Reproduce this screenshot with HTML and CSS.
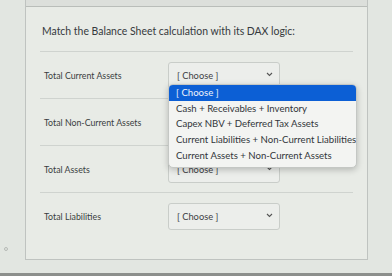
FILE: index.html
```html
<!DOCTYPE html>
<html>
<head>
<meta charset="utf-8">
<link rel="stylesheet" href="styles.css">
</head>
<body>
<div class="screen">
  <div class="card">
    <div class="card-top"></div>
    <div class="card-body">
      <p class="title">Match the Balance Sheet calculation with its DAX logic:</p>
      <div class="row">
        <span class="label">Total Current Assets</span>
        <div class="select-wrap">
          <div class="select"><span>[ Choose ]</span><svg class="chev" viewBox="0 0 8 6" width="7" height="5"><path d="M1 1.2 L4 4.2 L7 1.2" fill="none" stroke="#555" stroke-width="1.3"/></svg></div>
          <ul class="menu">
            <li class="selected">[ Choose ]</li>
            <li>Cash + Receivables + Inventory</li>
            <li>Capex NBV + Deferred Tax Assets</li>
            <li>Current Liabilities + Non-Current Liabilities</li>
            <li>Current Assets + Non-Current Assets</li>
          </ul>
        </div>
      </div>
      <div class="row">
        <span class="label">Total Non-Current Assets</span>
        <div class="select-wrap">
          <div class="select covered"><span>[ Choose ]</span><svg class="chev" viewBox="0 0 8 6" width="7" height="5"><path d="M1 1.2 L4 4.2 L7 1.2" fill="none" stroke="#555" stroke-width="1.3"/></svg></div>
        </div>
      </div>
      <div class="row">
        <span class="label">Total Assets</span>
        <div class="select-wrap">
          <div class="select"><span>[ Choose ]</span><svg class="chev" viewBox="0 0 8 6" width="7" height="5"><path d="M1 1.2 L4 4.2 L7 1.2" fill="none" stroke="#555" stroke-width="1.3"/></svg></div>
        </div>
      </div>
      <div class="row">
        <span class="label">Total Liabilities</span>
        <div class="select-wrap">
          <div class="select"><span>[ Choose ]</span><svg class="chev" viewBox="0 0 8 6" width="7" height="5"><path d="M1 1.2 L4 4.2 L7 1.2" fill="none" stroke="#555" stroke-width="1.3"/></svg></div>
        </div>
      </div>
    </div>
  </div>
  <span class="dot"></span>
  <div class="bottom-strip"></div>
</div>
</body>
</html>
```
FILE: styles.css
```css
* { box-sizing: border-box; }
html, body { margin: 0; padding: 0; }
body {
  width: 392px;
  height: 276px;
  overflow: hidden;
  background: #e2e6e1;
  font-family: Lato, "Open Sans", sans-serif;
  color: #3a3e41;
}
.screen {
  position: relative;
  width: 392px;
  height: 276px;
  display: flex;
  flex-direction: column;
}
.card {
  margin-left: 25px;
  width: 343px;
  height: 260px;
  border: 1px solid #bfc3c0;
  border-top: none;
  background: #e8ebe6;
  display: flex;
  flex-direction: column;
}
.card-top {
  height: 7px;
  border-bottom: 1px solid #b9bdb9;
  background: #dcdfdb;
}
.card-body {
  padding: 0 14px 0 14px;
}
.title {
  margin: 0;
  padding: 18px 0 0 2px;
  height: 44px;
  font-size: 10.45px;
  line-height: 13px;
  color: #363a3d;
}
.row {
  height: 47px;
  border-top: 1px solid #cfd3cf;
  display: flex;
  align-items: center;
}
.label {
  width: 128px;
  padding-left: 4px;
  font-size: 8.8px;
  color: #3a3e41;
}
.select-wrap {
  position: relative;
}
.select {
  width: 112px;
  height: 27px;
  border: 1px solid #c9cdc9;
  border-radius: 3px;
  background: #eceeeb;
  display: flex;
  align-items: center;
  justify-content: space-between;
  padding: 0 6px 0 8px;
  font-size: 9.3px;
  color: #3d4144;
}
.select.covered span { visibility: hidden; }
.chev { display: block; margin-top: -2px; }
.menu {
  position: absolute;
  left: 0;
  top: 22px;
  width: 189px;
  margin: 0;
  padding: 0 0 3px 0;
  list-style: none;
  background: #f3f4f2;
  border: 1px solid #c4c7c4;
  border-radius: 5px;
  box-shadow: 0 2px 6px rgba(0,0,0,0.22);
  z-index: 5;
  overflow: hidden;
}
.menu li {
  height: 15.8px;
  line-height: 15.8px;
  padding-left: 7px;
  font-size: 9.6px;
  color: #32363a;
  white-space: nowrap;
}
.menu li.selected {
  background: #0c5fd5;
  color: #eef3fb;
  height: 16px;
}
.dot {
  position: absolute;
  left: 4px;
  top: 247px;
  width: 4px;
  height: 4px;
  border: 1px solid #b6bab6;
  border-radius: 50%;
}
.bottom-strip {
  margin-top: auto;
  height: 3px;
  background: #8c8f8c;
}
```
